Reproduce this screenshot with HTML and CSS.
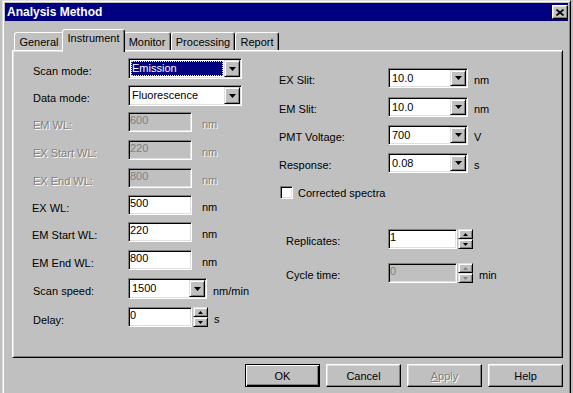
FILE: index.html
```html
<!DOCTYPE html>
<html>
<head>
<meta charset="utf-8">
<link rel="stylesheet" href="styles.css">
</head>
<body>
<div class="win">
  <div class="titlebar">
    <span class="title">Analysis Method</span>
    <span class="close"><svg width="8" height="7" viewBox="0 0 8 7"><path d="M0.5 0.5 L7.5 6.5 M7.5 0.5 L0.5 6.5" stroke="#000" stroke-width="1.6" fill="none"/></svg></span>
  </div>
  <div class="content">
    <div class="tabs">
      <div class="tab t-gen">General</div>
      <div class="tab t-ins sel">Instrument</div>
      <div class="tab t-mon">Monitor</div>
      <div class="tab t-pro">Processing</div>
      <div class="tab t-rep">Report</div>
    </div>
    <div class="panel">
      <div class="col left">
        <div class="row"><span class="lbl">Scan mode:</span>
          <div class="combo w114"><div class="val hl"><span>Emission</span></div><div class="dd"><svg width="7" height="4" viewBox="0 0 7 4"><polygon points="0,0 7,0 3.5,4" fill="#000"/></svg></div></div>
        </div>
        <div class="row"><span class="lbl">Data mode:</span>
          <div class="combo w114"><div class="val">Fluorescence</div><div class="dd"><svg width="7" height="4" viewBox="0 0 7 4"><polygon points="0,0 7,0 3.5,4" fill="#000"/></svg></div></div>
        </div>
        <div class="row"><span class="lbl dis">EM WL:</span><div class="edit w64 off">600</div><span class="unit u10 dis">nm</span></div>
        <div class="row"><span class="lbl dis">EX Start WL:</span><div class="edit w64 off">220</div><span class="unit u10 dis">nm</span></div>
        <div class="row"><span class="lbl dis">EX End WL:</span><div class="edit w64 off">800</div><span class="unit u10 dis">nm</span></div>
        <div class="row"><span class="lbl l2">EX WL:</span><div class="edit w64">500</div><span class="unit u10">nm</span></div>
        <div class="row"><span class="lbl l2">EM Start WL:</span><div class="edit w64">220</div><span class="unit u10">nm</span></div>
        <div class="row"><span class="lbl l2">EM End WL:</span><div class="edit w64">800</div><span class="unit u10">nm</span></div>
        <div class="row"><span class="lbl">Scan speed:</span>
          <div class="combo w79"><div class="val">1500</div><div class="dd"><svg width="7" height="4" viewBox="0 0 7 4"><polygon points="0,0 7,0 3.5,4" fill="#000"/></svg></div></div><span class="unit">nm/min</span>
        </div>
        <div class="row"><span class="lbl">Delay:</span><div class="edit w64">0</div>
          <div class="spin"><div class="sb"><svg width="5" height="3" viewBox="0 0 5 3"><polygon points="0,3 5,3 2.5,0" fill="#000"/></svg></div><div class="sb"><svg width="5" height="3" viewBox="0 0 5 3"><polygon points="0,0 5,0 2.5,3" fill="#000"/></svg></div></div><span class="unit">s</span>
        </div>
      </div>
      <div class="col right">
        <div class="row"><span class="rlbl">EX Slit:</span>
          <div class="combo w80 h20"><div class="val">10.0</div><div class="dd"><svg width="7" height="4" viewBox="0 0 7 4"><polygon points="0,0 7,0 3.5,4" fill="#000"/></svg></div></div><span class="unit">nm</span>
        </div>
        <div class="row"><span class="rlbl">EM Slit:</span>
          <div class="combo w80 h20"><div class="val">10.0</div><div class="dd"><svg width="7" height="4" viewBox="0 0 7 4"><polygon points="0,0 7,0 3.5,4" fill="#000"/></svg></div></div><span class="unit">nm</span>
        </div>
        <div class="row"><span class="rlbl">PMT Voltage:</span>
          <div class="combo w80 h20"><div class="val">700</div><div class="dd"><svg width="7" height="4" viewBox="0 0 7 4"><polygon points="0,0 7,0 3.5,4" fill="#000"/></svg></div></div><span class="unit">V</span>
        </div>
        <div class="row"><span class="rlbl">Response:</span>
          <div class="combo w80 h20"><div class="val">0.08</div><div class="dd"><svg width="7" height="4" viewBox="0 0 7 4"><polygon points="0,0 7,0 3.5,4" fill="#000"/></svg></div></div><span class="unit">s</span>
        </div>
        <div class="row chkrow"><span class="chk"></span><span class="chklbl">Corrected spectra</span></div>
        <div class="row"><span class="rlbl ind">Replicates:</span><div class="edit w69">1</div>
          <div class="spin"><div class="sb"><svg width="5" height="3" viewBox="0 0 5 3"><polygon points="0,3 5,3 2.5,0" fill="#000"/></svg></div><div class="sb"><svg width="5" height="3" viewBox="0 0 5 3"><polygon points="0,0 5,0 2.5,3" fill="#000"/></svg></div></div>
        </div>
        <div class="row"><span class="rlbl ind">Cycle time:</span><div class="edit w69 off">0</div>
          <div class="spin"><div class="sb"><svg width="5" height="3" viewBox="0 0 5 3"><polygon points="0,3 5,3 2.5,0" fill="#808080"/></svg></div><div class="sb"><svg width="5" height="3" viewBox="0 0 5 3"><polygon points="0,0 5,0 2.5,3" fill="#808080"/></svg></div></div><span class="unit">min</span>
        </div>
      </div>
    </div>
    <div class="buttons">
      <div class="btn def"><span>OK</span></div>
      <div class="btn">Cancel</div>
      <div class="btn disabled"><span><u>A</u>pply</span></div>
      <div class="btn">Help</div>
    </div>
  </div>
</div>
</body>
</html>
```
FILE: styles.css
```css
* { box-sizing: border-box; }
html, body { margin: 0; padding: 0; }
body {
  width: 573px; height: 393px; overflow: hidden;
  background: #c0c0c0;
  font-family: "Liberation Sans", Arial, sans-serif;
  font-size: 11px; color: #000;
}
.win {
  margin-left: 2px;
  width: 569px; height: 393px;
  border: 1px solid; border-bottom: 0;
  border-color: #dfdfdf #000 #000 #dfdfdf;
  box-shadow: inset 1px 1px #fff, inset -1px 0 #808080;
  padding: 2px;
  background: #c0c0c0;
}
.titlebar {
  height: 18px; background: #000080;
  display: flex; align-items: center; justify-content: space-between;
  padding: 0 0 0 2px;
}
.title { color: #fff; font-weight: bold; font-size: 12px; }
.close {
  width: 16px; height: 14px; background: #c0c0c0;
  border: 1px solid; border-color: #fff #000 #000 #fff;
  box-shadow: inset -1px -1px #808080, inset 1px 1px #dfdfdf;
  display: flex; align-items: center; justify-content: center;
}
.close svg { display: block; }
.content { padding: 8px 0 0 7px; }
.tabs { display: flex; align-items: flex-end; height: 21px; padding-left: 2px; position: relative; z-index: 1; }
.tab {
  height: 18px; background: #c0c0c0;
  border: 1px solid; border-bottom: none;
  border-color: #fff #000 transparent #fff;
  border-radius: 3px 3px 0 0;
  box-shadow: inset -1px 0 #808080;
  text-align: center; line-height: 13px; padding-top: 3px;
}
.t-gen { width: 50px; }
.t-ins { width: 59px; }
.t-mon { width: 48px; }
.t-pro { width: 64px; }
.t-rep { width: 44px; }
.tab.sel {
  height: 23px; margin: 0 -2px -2px; width: 63px;
  position: relative; z-index: 2; padding-top: 2px;
}
.panel {
  width: 551px; height: 308px;
  border: 1px solid; border-color: #fff #000 #000 #fff;
  box-shadow: inset 1px 1px #dfdfdf, inset -1px -1px #808080;
  display: flex; padding: 7px 0 0 20px;
}
.left {
  width: 246px; display: grid; align-content: start;
  grid-template-rows: 27px 27px 28px 28px 27px 27px 28px 28px 29px 21px;
}
.right {
  display: grid; align-content: start; padding-top: 10px;
  grid-template-rows: 29px 28px 28px 31px 45px 34px 20px;
}
.row { display: flex; align-items: center; align-self: start; }
.lbl { width: 95px; flex: none; padding-top: 5px; }
.lbl.l2 { margin-left: -1px; width: 96px; }
.rlbl { width: 109px; flex: none; padding-top: 4px; }
.rlbl.ind { padding-left: 7px; }
.unit { margin-left: 6px; padding-top: 4px; }
.unit.u10 { margin-left: 10px; }
.dis { color: #808080; text-shadow: 1px 1px 0 #fff; }
.edit {
  height: 20px; background: #fff;
  border: 1px solid; border-color: #808080 #fff #fff #808080;
  box-shadow: inset 1px 1px #000, inset -1px -1px #dfdfdf;
  padding: 1px 0 0 1px; line-height: 13px;
}
.edit.off { background: #c0c0c0; color: #808080; }
.w64 { width: 64px; }
.w69 { width: 69px; }
.combo {
  height: 21px; background: #fff; display: flex;
  border: 1px solid; border-color: #808080 #fff #fff #808080;
  box-shadow: inset 1px 1px #000, inset -1px -1px #dfdfdf;
  padding: 1px;
}
.combo.h20 { height: 20px; }
.w114 { width: 114px; }
.w79 { width: 79px; }
.w80 { width: 80px; }
.val { flex: 1; display: flex; align-items: center; padding-left: 2px; line-height: 13px; }
.val.hl { padding: 1px; }
.val.hl span {
  flex: 1; height: 100%; background: #000080; color: #fff;
  outline: 1px dotted #e8e890; outline-offset: -1px;
  display: flex; align-items: center; padding-left: 1px;
}
.dd {
  width: 16px; flex: none; background: #c0c0c0;
  border: 1px solid; border-color: #dfdfdf #000 #000 #dfdfdf;
  box-shadow: inset 1px 1px #fff, inset -1px -1px #808080;
  display: flex; align-items: center; justify-content: center;
}
.dd svg, .sb svg { display: block; }
.spin { width: 15px; height: 20px; display: flex; flex-direction: column; margin-left: 1px; }
.sb {
  height: 10px; background: #c0c0c0;
  border: 1px solid; border-color: #dfdfdf #000 #000 #dfdfdf;
  box-shadow: inset 1px 1px #fff, inset -1px -1px #808080;
  display: flex; align-items: center; justify-content: center;
}
.chkrow { height: 16px; }
.chk {
  width: 13px; height: 13px; margin-left: 1px; background: #fff;
  border: 1px solid; border-color: #808080 #fff #fff #808080;
  box-shadow: inset 1px 1px #000, inset -1px -1px #dfdfdf;
}
.chklbl { margin-left: 5px; padding-top: 1px; }
.buttons { width: 551px; display: flex; justify-content: flex-end; gap: 6px; margin-top: 6px; }
.btn {
  width: 75px; height: 23px; background: #c0c0c0;
  border: 1px solid; border-color: #fff #000 #000 #fff;
  box-shadow: inset -1px -1px #808080, inset 1px 1px #dfdfdf;
  display: flex; align-items: center; justify-content: center;
}
.btn.def {
  border: 1px solid #000;
  box-shadow: inset 1px 1px #fff, inset -1px -1px #000, inset -2px -2px #808080;
}
.btn.disabled { color: #808080; text-shadow: 1px 1px 0 #fff; }
```
